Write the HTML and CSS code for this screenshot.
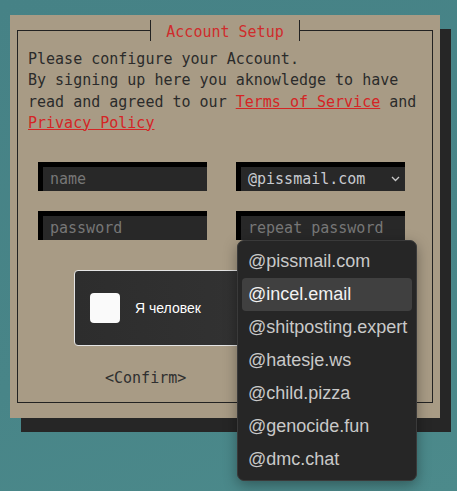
FILE: index.html
```html
<!DOCTYPE html>
<html>
<head>
  <meta charset="utf-8">
  <link rel="stylesheet" href="styles.css">
</head>
<body>
<div class="setup-page">
  <form class="panel">
    <fieldset class="frame">
      <legend>Account Setup</legend>
      <p class="intro">Please configure your Account.<br>
        By signing up here you aknowledge to have read and agreed to our <a href="#">Terms of Service</a> and <a href="#">Privacy Policy</a></p>
      <div class="fields">
        <input type="text" placeholder="name">
        <div class="domain">
          <div class="domain-select">
            <span>@pissmail.com</span>
            <svg width="9" height="6" viewBox="0 0 9 6"><path d="M1 1 L4.5 4.5 L8 1" fill="none" stroke="#c8c8c8" stroke-width="1.3"/></svg>
          </div>
          <ul class="domain-list">
            <li>@pissmail.com</li>
            <li class="active">@incel.email</li>
            <li>@shitposting.expert</li>
            <li>@hatesje.ws</li>
            <li>@child.pizza</li>
            <li>@genocide.fun</li>
            <li>@dmc.chat</li>
          </ul>
        </div>
        <input type="password" placeholder="password">
        <input type="password" placeholder="repeat password">
      </div>
      <div class="captcha">
        <span class="captcha-box"></span>
        <span class="captcha-label">Я человек</span>
      </div>
      <div class="actions">
        <button type="button">&lt;Confirm&gt;</button>
      </div>
    </fieldset>
  </form>
</div>
</body>
</html>
```

FILE: styles.css
```css
body {
  margin: 0;
  background-color: #478386;
  background-image: linear-gradient(160deg, #468286 0%, #488588 60%, #4c8a8b 100%);
  font-family: "DejaVu Sans Mono", monospace;
  color: #2b2b2b;
  height: 491px;
  overflow: hidden;
}

.setup-page {
  padding: 15px 0 0 10px;
}

.panel {
  width: 430px;
  background: #a89b85;
  box-shadow: 11px 14px 0 0 #262626;
  padding: 5px 0 15px;
  box-sizing: border-box;
}

.frame {
  margin: 0 7px;
  padding: 8px 10px 14px;
  border: 1px solid #222;
  min-width: 0;
}

.frame legend {
  margin: 0 auto;
  padding: 3px 15px 0;
  border-left: 1px solid #222;
  border-right: 1px solid #222;
  color: #cf2c2c;
  font-size: 15px;
  line-height: 18px;
}

.intro {
  margin: 0;
  font-size: 15px;
  line-height: 21.25px;
}
.intro a {
  color: #d42525;
}

.fields {
  display: grid;
  grid-template-columns: 169px 169px;
  column-gap: 29px;
  row-gap: 20px;
  margin: 28px 0 0 10px;
}

.fields input,
.domain-select {
  box-sizing: border-box;
  width: 169px;
  height: 29px;
  margin: 0;
  border: 0;
  border-top: 5px solid #000;
  border-left: 5px solid #000;
  border-radius: 0;
  background: #282828;
  padding: 0 0 0 7px;
  font-family: "DejaVu Sans Mono", monospace;
  font-size: 15px;
  color: #c8cbd0;
  outline: 0;
}
.fields input::placeholder {
  color: #777;
}

.domain {
  position: relative;
}

.domain-select {
  display: flex;
  align-items: center;
  justify-content: space-between;
  padding-right: 5px;
}

.domain-list {
  position: absolute;
  top: 78px;
  left: 1px;
  z-index: 2;
  width: 180px;
  box-sizing: border-box;
  margin: 0;
  padding: 4px 4px;
  list-style: none;
  background: #262626;
  border: 1px solid #3a3a3a;
  border-radius: 7px;
  box-shadow: 0 4px 14px rgba(0, 0, 0, 0.35);
  font-family: "Liberation Sans", Arial, sans-serif;
  font-size: 18px;
  color: #c9c9c9;
}
.domain-list li {
  height: 33px;
  line-height: 33px;
  padding-left: 6px;
  border-radius: 4px;
  white-space: nowrap;
}
.domain-list li.active {
  background: #404040;
  color: #f2f2f2;
}

.captcha {
  display: flex;
  align-items: center;
  gap: 15px;
  width: 302px;
  height: 76px;
  box-sizing: border-box;
  margin: 30px auto 0;
  padding-left: 15px;
  border: 1px solid #e4e4e4;
  border-radius: 4px;
  background: linear-gradient(90deg, #2d2d2d, #363636);
}

.captcha-box {
  width: 30px;
  height: 30px;
  background: #fafafa;
  border-radius: 4px;
}

.captcha-label {
  font-family: "Liberation Sans", Arial, sans-serif;
  font-size: 14px;
  color: #fff;
}

.actions {
  margin-top: 22px;
  padding-left: 77px;
}

.actions button {
  padding: 0;
  border: 0;
  background: none;
  font-family: "DejaVu Sans Mono", monospace;
  font-size: 15px;
  line-height: 20px;
  color: #2f2f2f;
  cursor: pointer;
}
```
